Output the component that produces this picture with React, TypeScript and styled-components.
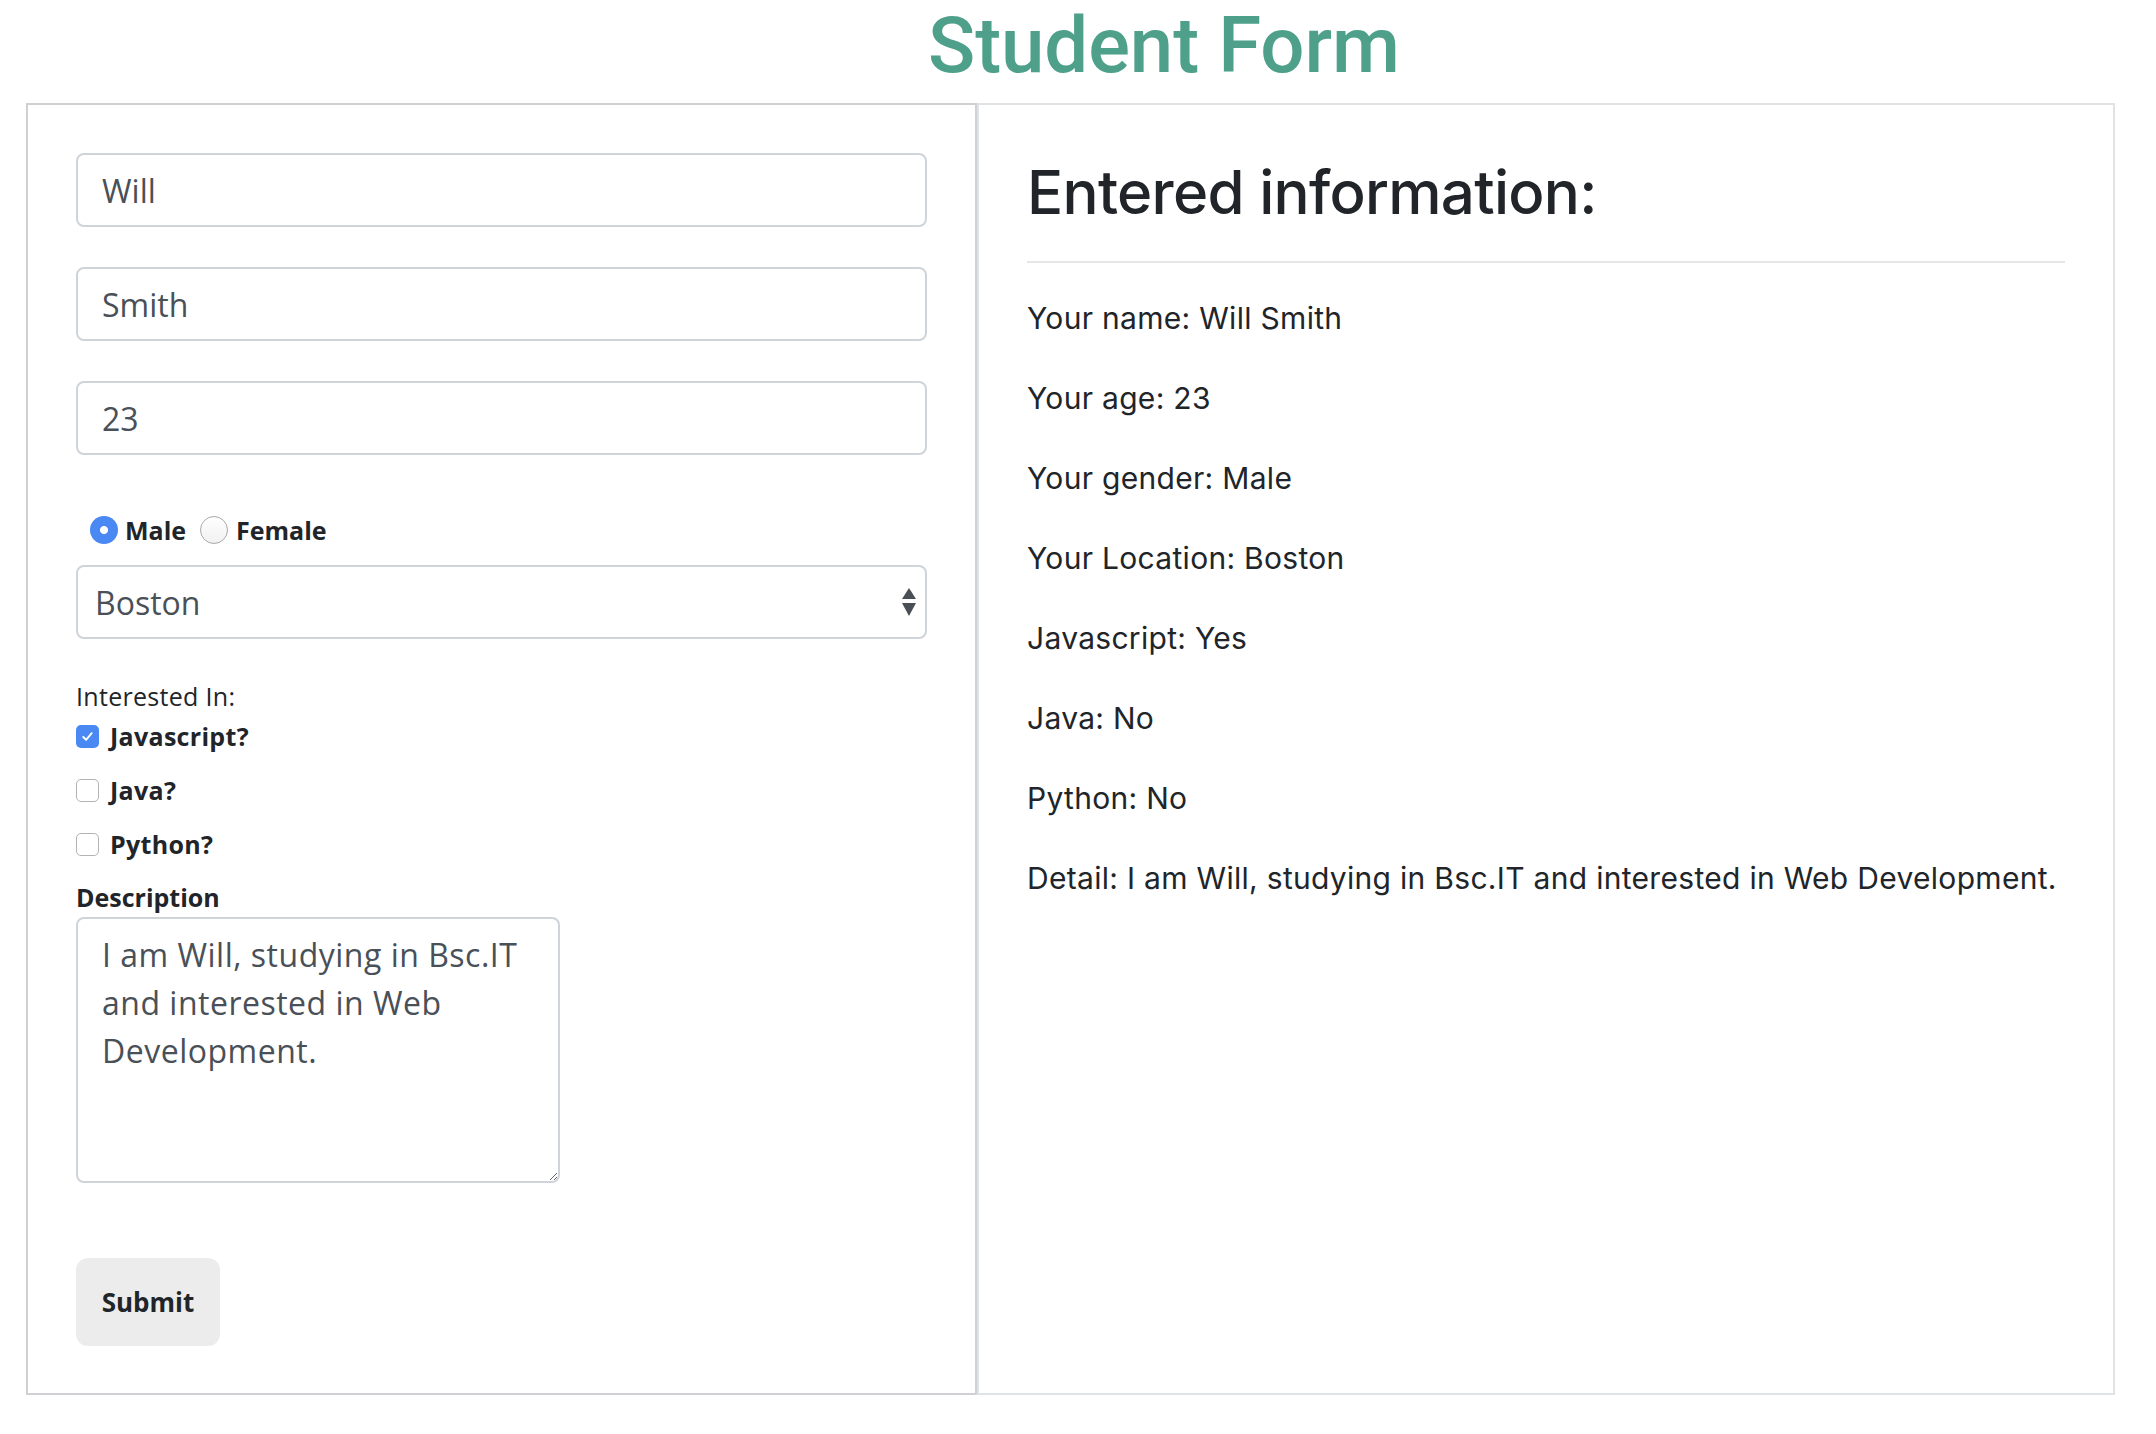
import React from "react";
import styled, { createGlobalStyle } from "styled-components";

const GlobalStyle = createGlobalStyle`
  html, body { margin: 0; padding: 0; background: #ffffff; }
  body { font-family: "Open Sans", "Noto Sans", sans-serif; color: #212529; }
  * { box-sizing: border-box; }
`;

const Page = styled.div`
  width: 2156px;
  padding-left: 26px;
`;

const Title = styled.h1`
  margin: 0 0 11px 902px;
  height: 92px;
  font-family: Roboto, "Liberation Sans", sans-serif;
  font-weight: 500;
  font-size: 78px;
  line-height: 92px;
  color: #4fa08a;
  letter-spacing: -0.1px;
`;

const Panels = styled.div`
  display: flex;
  width: 2089px;
`;

const FormPanel = styled.form`
  width: 951px;
  flex: none;
  border: 2px solid #cfd0d3;
  padding: 48px 48px 47px 48px;
  display: flex;
  flex-direction: column;
  align-items: flex-start;
`;

const InfoPanel = styled.section`
  flex: 1;
  border: 2px solid #e0e3e6;
  padding: 51px 48px 48px 48px;
  font-family: Inter, "Liberation Sans", sans-serif;
  color: #212529;
`;

const TextInput = styled.input<{ $mb: number }>`
  width: 100%;
  height: 74px;
  margin: 0 0 ${(p) => p.$mb}px 0;
  border: 2px solid #ced4da;
  border-radius: 8px;
  padding: 0 24px;
  font-family: "Open Sans", "Noto Sans", sans-serif;
  font-size: 32px;
  color: #495057;
  background: #fff;
  outline: none;
`;

const RadioGroup = styled.div`
  display: flex;
  align-items: center;
  height: 28px;
  margin: 61px 0 21px 14px;
`;

const RadioLabel = styled.label<{ $ml: number }>`
  display: flex;
  align-items: center;
  margin-left: ${(p) => p.$ml}px;
  font-weight: 700;
  font-size: 25px;
  color: #212529;
`;

const RadioDot = styled.span<{ $on: boolean }>`
  width: 28px;
  height: 28px;
  border-radius: 50%;
  flex: none;
  margin-right: ${(p) => (p.$on ? 7 : 8)}px;
  border: ${(p) => (p.$on ? "none" : "1.5px solid #a9a9a9")};
  background: ${(p) =>
    p.$on
      ? "radial-gradient(circle, #ffffff 0 3.6px, #4a89f3 4.4px)"
      : "linear-gradient(#ffffff, #f1f1f1)"};
`;

const SelectWrap = styled.div`
  position: relative;
  width: 100%;
  height: 74px;
  margin-bottom: 39px;
`;

const Select = styled.select`
  appearance: none;
  -webkit-appearance: none;
  width: 100%;
  height: 74px;
  border: 2px solid #ced4da;
  border-radius: 8px;
  padding: 0 17px;
  font-family: "Open Sans", "Noto Sans", sans-serif;
  font-size: 32px;
  color: #495057;
  background: #fff;
  outline: none;
`;

const SelectArrows = styled.svg`
  position: absolute;
  left: 826px;
  top: 23px;
  width: 14px;
  height: 28px;
  pointer-events: none;
`;

const GroupLabel = styled.div<{ $bold?: boolean }>`
  font-size: 25px;
  line-height: 36px;
  height: 36px;
  font-weight: ${(p) => (p.$bold ? 700 : 400)};
  letter-spacing: ${(p) => (p.$bold ? 0 : 0.3)}px;
  color: #212529;
`;

const CheckRow = styled.label<{ $mt: number }>`
  display: flex;
  align-items: center;
  height: 36px;
  margin-top: ${(p) => p.$mt}px;
  font-size: 25px;
  font-weight: 700;
  letter-spacing: 0.3px;
  color: #212529;
`;

const CheckBox = styled.span<{ $on: boolean }>`
  width: 23px;
  height: 23px;
  flex: none;
  border-radius: 5px;
  margin-right: 11px;
  display: flex;
  align-items: center;
  justify-content: center;
  border: ${(p) => (p.$on ? "none" : "1.5px solid #b3b3b3")};
  background: ${(p) => (p.$on ? "#4a89f3" : "#ffffff")};
`;

const DescLabel = styled(GroupLabel)`
  margin-top: 17px;
  margin-bottom: 2px;
`;

const TextArea = styled.textarea`
  width: 484px;
  height: 266px;
  border: 2px solid #ced4da;
  border-radius: 8px;
  padding: 12px 24px;
  font-family: "Open Sans", "Noto Sans", sans-serif;
  font-size: 32px;
  line-height: 48px;
  letter-spacing: 0.5px;
  color: #495057;
  resize: both;
  outline: none;
  margin-bottom: 75px;
`;

const SubmitButton = styled.button`
  width: 144px;
  height: 88px;
  border: none;
  border-radius: 12px;
  background: #ececec;
  font-family: "Open Sans", "Noto Sans", sans-serif;
  font-size: 26px;
  font-weight: 700;
  color: #212529;
  padding: 0;
`;

const InfoHeading = styled.h2`
  margin: 0;
  font-size: 60px;
  line-height: 72px;
  font-weight: 500;
  letter-spacing: -0.7px;
  color: #212529;
`;

const Rule = styled.hr`
  margin: 33px 0 31px 0;
  border: none;
  border-top: 2px solid #e6e6e6;
  height: 0;
`;

const InfoLine = styled.p`
  margin: 0 0 32px 0;
  font-size: 30px;
  line-height: 48px;
  letter-spacing: 0.3px;
`;

const Check = () => (
  <svg width="15" height="15" viewBox="0 0 16 16">
    <path d="M3.5 8.5 L6.5 11.5 L12.5 4.5" fill="none" stroke="#ffffff" strokeWidth="2" strokeLinecap="round" strokeLinejoin="round" />
  </svg>
);

const description = "I am Will, studying in Bsc.IT and interested in Web Development.";

const info = [
  "Your name: Will Smith",
  "Your age: 23",
  "Your gender: Male",
  "Your Location: Boston",
  "Javascript: Yes",
  "Java: No",
  "Python: No",
  `Detail: ${description}`,
];

const interests = [
  { label: "Javascript?", on: true, mt: 4 },
  { label: "Java?", on: false, mt: 18 },
  { label: "Python?", on: false, mt: 18 },
];

export default function App() {
  return (
    <>
      <GlobalStyle />
      <Page>
        <Title>Student Form</Title>
        <Panels>
          <FormPanel onSubmit={(e) => e.preventDefault()}>
            <TextInput $mb={40} defaultValue="Will" />
            <TextInput $mb={40} defaultValue="Smith" />
            <TextInput $mb={0} defaultValue="23" />
            <RadioGroup>
              <RadioLabel $ml={0}>
                <RadioDot $on={true} />
                Male
              </RadioLabel>
              <RadioLabel $ml={14}>
                <RadioDot $on={false} />
                Female
              </RadioLabel>
            </RadioGroup>
            <SelectWrap>
              <Select defaultValue="Boston">
                <option>Boston</option>
                <option>New York</option>
                <option>Chicago</option>
              </Select>
              <SelectArrows viewBox="0 0 14 28">
                <path d="M7 0 L14 11 L0 11 Z" fill="#4a4f55" />
                <path d="M0 15 L14 15 L7 28 Z" fill="#4a4f55" />
              </SelectArrows>
            </SelectWrap>
            <GroupLabel>Interested In:</GroupLabel>
            {interests.map((it) => (
              <CheckRow key={it.label} $mt={it.mt}>
                <CheckBox $on={it.on}>{it.on && <Check />}</CheckBox>
                {it.label}
              </CheckRow>
            ))}
            <DescLabel $bold>Description</DescLabel>
            <TextArea spellCheck={false} defaultValue={description} />
            <SubmitButton type="submit">Submit</SubmitButton>
          </FormPanel>
          <InfoPanel>
            <InfoHeading>Entered information:</InfoHeading>
            <Rule />
            {info.map((line) => (
              <InfoLine key={line}>{line}</InfoLine>
            ))}
          </InfoPanel>
        </Panels>
      </Page>
    </>
  );
}
